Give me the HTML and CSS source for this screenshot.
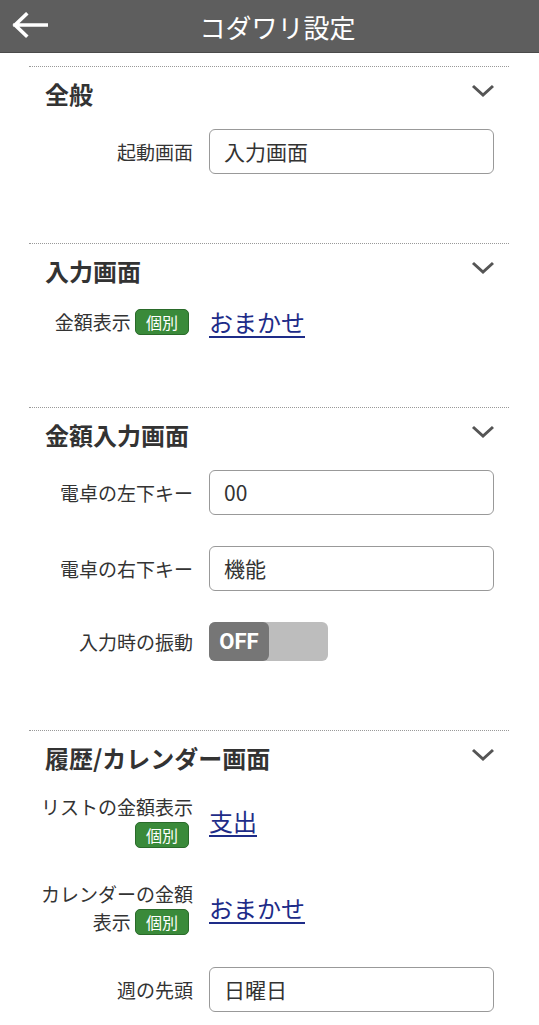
FILE: index.html
```html
<!DOCTYPE html>
<html lang="ja">
<head>
<meta charset="utf-8">
<title>コダワリ設定</title>
<link rel="stylesheet" href="styles.css">
</head>
<body>
<header class="appbar">
  <button class="back" aria-label="戻る">
    <svg width="36" height="28" viewBox="0 0 36 28"><path d="M3 13 H35 M14 2.5 L3 13 L14 23.5" fill="none" stroke="#fff" stroke-width="3.6" stroke-linecap="square" stroke-linejoin="miter"/></svg>
  </button>
  <h1 class="title">コダワリ設定</h1>
  <span class="spacer"></span>
</header>
<main class="page">
  <section class="sec">
    <div class="sec-head"><h2>全般</h2><svg class="chev" width="24" height="14" viewBox="0 0 24 14"><path d="M2 2 L12 11 L22 2" fill="none" stroke="#555" stroke-width="3"/></svg></div>
    <div class="rows">
      <div class="row"><div class="label">起動画面</div><div class="field">入力画面</div></div>
    </div>
  </section>
  <section class="sec">
    <div class="sec-head"><h2>入力画面</h2><svg class="chev" width="24" height="14" viewBox="0 0 24 14"><path d="M2 2 L12 11 L22 2" fill="none" stroke="#555" stroke-width="3"/></svg></div>
    <div class="rows">
      <div class="row"><div class="label">金額表示 <span class="badge">個別</span></div><a class="link" href="#">おまかせ</a></div>
    </div>
  </section>
  <section class="sec">
    <div class="sec-head"><h2>金額入力画面</h2><svg class="chev" width="24" height="14" viewBox="0 0 24 14"><path d="M2 2 L12 11 L22 2" fill="none" stroke="#555" stroke-width="3"/></svg></div>
    <div class="rows">
      <div class="row"><div class="label">電卓の左下キー</div><div class="field">00</div></div>
      <div class="row"><div class="label">電卓の右下キー</div><div class="field">機能</div></div>
      <div class="row"><div class="label">入力時の振動</div><div class="toggle"><span class="knob">OFF</span></div></div>
    </div>
  </section>
  <section class="sec">
    <div class="sec-head"><h2>履歴/カレンダー画面</h2><svg class="chev" width="24" height="14" viewBox="0 0 24 14"><path d="M2 2 L12 11 L22 2" fill="none" stroke="#555" stroke-width="3"/></svg></div>
    <div class="rows">
      <div class="row"><div class="label">リストの金額表示 <span class="badge">個別</span></div><a class="link" href="#">支出</a></div>
      <div class="row"><div class="label">カレンダーの金額表示 <span class="badge">個別</span></div><a class="link" href="#">おまかせ</a></div>
      <div class="row"><div class="label">週の先頭</div><div class="field">日曜日</div></div>
    </div>
  </section>
</main>
</body>
</html>
```
FILE: styles.css
```css
html, body {
  margin: 0;
  padding: 0;
  background: #fff;
  font-family: "Noto Sans CJK JP", "Noto Sans", sans-serif;
  color: #333;
}
.appbar {
  height: 53px;
  background: #5e5e5e;
  border-bottom: 1px solid #4a4a4a;
  box-sizing: border-box;
  display: flex;
  align-items: center;
}
.back {
  width: 60px;
  height: 53px;
  padding: 0 0 0 12px;
  margin: 0;
  border: 0;
  background: none;
  display: flex;
  align-items: center;
}
.title {
  flex: 1;
  margin: 0;
  text-align: center;
  color: #fff;
  font-size: 26px;
  font-weight: normal;
  line-height: 53px;
}
.spacer {
  width: 44px;
}
.page {
  padding: 13px 30px 0 29px;
}
.sec {
  border-top: 1px dotted #999;
  padding: 12px 15px 69px 0;
}
.sec-head {
  display: flex;
  align-items: center;
  justify-content: space-between;
  padding-left: 16px;
  height: 30px;
}
.sec-head h2 {
  margin: 0;
  font-size: 24px;
  font-weight: bold;
  line-height: 30px;
  color: #333;
}
.chev {
  margin-top: -6px;
  margin-right: -1px;
}
.rows {
  margin-top: 20px;
  display: flex;
  flex-direction: column;
  gap: 31px;
}
.row {
  display: grid;
  grid-template-columns: 164px 1fr;
  column-gap: 16px;
  align-items: center;
}
.label {
  text-align: right;
  font-size: 19px;
  line-height: 28px;
  color: #333;
}
.badge {
  display: inline-block;
  box-sizing: border-box;
  height: 26px;
  width: 54px;
  margin: 1px 4px 0 0;
  background: #3a8a3a;
  border: 1px solid #2a6a2a;
  border-radius: 5px;
  color: #fff;
  font-size: 16px;
  line-height: 24px;
  text-align: center;
  vertical-align: top;
}
.field {
  box-sizing: border-box;
  height: 45px;
  border: 1px solid #999;
  border-radius: 6px;
  padding: 0 14px;
  font-size: 21px;
  line-height: 43px;
  color: #333;
}
.link {
  justify-self: start;
  font-size: 24px;
  line-height: 32px;
  color: #1e2c88;
  text-decoration: underline;
  text-underline-offset: 4px;
}
.toggle {
  width: 119px;
  height: 39px;
  background: #bdbdbd;
  border-radius: 6px;
  display: flex;
}
.knob {
  width: 60px;
  height: 39px;
  background: #767676;
  border-radius: 6px;
  color: #fff;
  font-family: Roboto, "Liberation Sans", sans-serif;
  font-weight: bold;
  font-size: 22px;
  line-height: 39px;
  text-align: center;
}
```
